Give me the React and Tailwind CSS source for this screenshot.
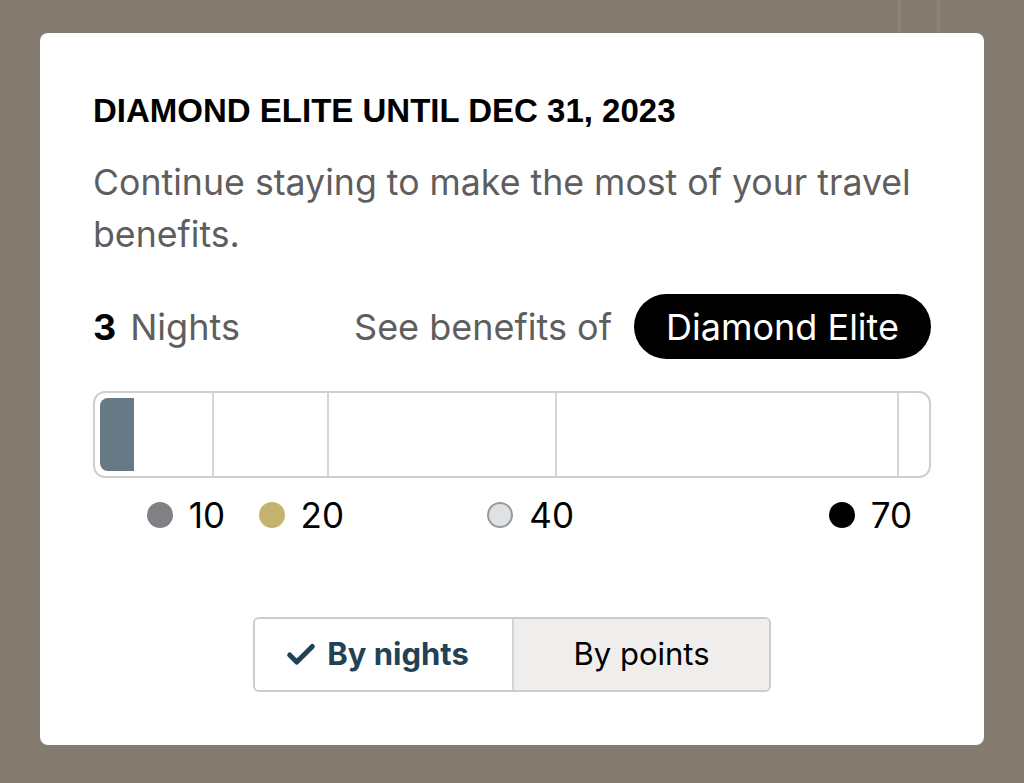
import React from "react";
import { Check } from "lucide-react";

const segments = [
  { w: "w-[119px]", label: "10", dot: "bg-[#808185]", shift: "-mr-[11px]" },
  { w: "w-[115px]", label: "20", dot: "bg-[#c4b36d]", shift: "-mr-[15px]" },
  { w: "w-[228px]", label: "40", dot: "bg-[#dfe2e5] border-2 border-[#9a9a9a]", shift: "-mr-[17px]" },
  { w: "w-[342px]", label: "70", dot: "bg-black", shift: "-mr-[13px]" },
];

export default function App() {
  return (
    <div className="relative min-h-screen bg-[#837b70] pl-[40px] pr-[40px] pt-[33px] pb-[39px] font-['Inter',sans-serif]">
      {/* traits discrets de l'arrière-plan */}
      <div className="absolute top-0 left-[898px] w-[3px] h-[40px] bg-[#8c8479]" />
      <div className="absolute top-0 left-[937px] w-[3px] h-[40px] bg-[#8c8479]" />

      <div className="relative bg-white rounded-[8px] px-[53px] pt-[59px] pb-[53px]">
        {/* Titre */}
        <h2 className="font-['Liberation_Sans',Arial,sans-serif] font-bold text-[33px] leading-[37px] text-black">
          DIAMOND ELITE UNTIL DEC 31, 2023
        </h2>
        <p className="mt-[27px] text-[35.7px] leading-[52px] text-[#5e5e5e]">
          Continue staying to make the most of your travel benefits.
        </p>

        {/* Nuits + bouton niveau */}
        <div className="mt-[34px] flex items-center justify-between h-[65px]">
          <div className="text-[36px]">
            <span className="font-bold text-black">3</span>
            <span className="ml-[14px] text-[#5e5e5e]">Nights</span>
          </div>
          <div className="flex items-center gap-[22px]">
            <span className="text-[36px] text-[#5e5e5e]">See benefits of</span>
            <button className="h-[65px] px-[32px] rounded-full bg-black text-white text-[36px]">
              Diamond Elite
            </button>
          </div>
        </div>

        {/* Barre de progression */}
        <div className="mt-[32px] relative h-[87px] border-2 border-[#cfcfcf] rounded-[12px] flex overflow-hidden">
          {segments.map((s) => (
            <div key={s.label} className={`${s.w} h-full border-r-2 border-[#d6d6d6]`} />
          ))}
          <div className="flex-1" />
          <div className="absolute left-[5px] top-[5px] bottom-[5px] w-[34px] bg-[#677985] rounded-l-[8px]" />
        </div>

        {/* Légende */}
        <div className="mt-[22px] flex h-[30px] pl-[2px]">
          {segments.map((s) => (
            <div key={s.label} className={`${s.w} flex justify-end`}>
              <div className={`flex items-center gap-[16px] ${s.shift}`}>
                <span className={`w-[26px] h-[26px] rounded-full ${s.dot}`} />
                <span className="text-[35px] leading-[30px] text-black">{s.label}</span>
              </div>
            </div>
          ))}
        </div>

        {/* Bascule */}
        <div className="mt-[87px] flex justify-center">
          <div className="flex w-[518px] h-[75px] border-2 border-[#cccccc] rounded-[6px] overflow-hidden">
            <button className="w-[257px] shrink-0 flex items-center justify-center gap-[9px] pr-[14px] bg-white text-[#1f4257] font-bold text-[31px]">
              <Check className="w-[34px] h-[34px]" strokeWidth={3.5} />
              By nights
            </button>
            <button className="flex-1 flex items-center justify-center bg-[#efeeec] border-l-2 border-[#d4d4d4] text-black text-[31px]">
              By points
            </button>
          </div>
        </div>
      </div>
    </div>
  );
}
